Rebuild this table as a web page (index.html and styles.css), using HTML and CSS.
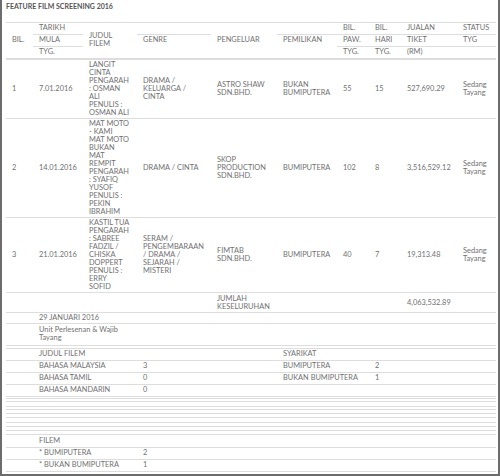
FILE: index.html
```html
<!DOCTYPE html>
<html lang="ms">
<head>
<meta charset="utf-8">
<title>Feature Film Screening 2016</title>
<link rel="stylesheet" href="styles.css">
</head>
<body>
<div class="panel">
  <h1 class="title">FEATURE FILM SCREENING 2016</h1>
  <table class="report">
    <colgroup>
      <col class="c-bil"><col class="c-tarikh"><col class="c-judul"><col class="c-genre"><col class="c-peng">
      <col class="c-pem"><col class="c-paw"><col class="c-hari"><col class="c-jual"><col class="c-status">
    </colgroup>
    <thead>
      <tr>
        <th rowspan="3" class="mid">BIL.</th>
        <th>TARIKH</th>
        <th rowspan="3" class="mid">JUDUL FILEM</th>
        <th></th>
        <th rowspan="3" class="mid">PENGELUAR</th>
        <th></th>
        <th>BIL.</th>
        <th>BIL.</th>
        <th>JUALAN</th>
        <th>STATUS</th>
      </tr>
      <tr>
        <th>MULA</th>
        <th rowspan="2" class="genre">GENRE</th>
        <th rowspan="2" class="pemilikan">PEMILIKAN</th>
        <th>PAW.</th>
        <th>HARI</th>
        <th>TIKET</th>
        <th>TYG</th>
      </tr>
      <tr>
        <th>TYG.</th>
        <th>TYG.</th>
        <th>TYG.</th>
        <th>(RM)</th>
        <th></th>
      </tr>
    </thead>
    <tbody>
      <tr class="first">
        <td>1</td>
        <td>7.01.2016</td>
        <td class="title-cell">LANGIT<br>CINTA<br>PENGARAH<br>: OSMAN<br>ALI<br>PENULIS :<br>OSMAN ALI</td>
        <td>DRAMA / KELUARGA / CINTA</td>
        <td>ASTRO SHAW SDN.BHD.</td>
        <td>BUKAN BUMIPUTERA</td>
        <td>55</td>
        <td>15</td>
        <td>527,690.29</td>
        <td>Sedang Tayang</td>
      </tr>
      <tr>
        <td>2</td>
        <td>14.01.2016</td>
        <td class="title-cell">MAT MOTO<br>- KAMI<br>MAT MOTO<br>BUKAN<br>MAT<br>REMPIT<br>PENGARAH<br>: SYAFIQ<br>YUSOF<br>PENULIS :<br>PEKIN<br>IBRAHIM</td>
        <td>DRAMA / CINTA</td>
        <td>SKOP PRODUCTION SDN.BHD.</td>
        <td>BUMIPUTERA</td>
        <td>102</td>
        <td>8</td>
        <td>3,516,529.12</td>
        <td>Sedang Tayang</td>
      </tr>
      <tr>
        <td>3</td>
        <td>21.01.2016</td>
        <td class="title-cell">KASTIL TUA<br>PENGARAH<br>: SABREE<br>FADZIL /<br>CHISKA<br>DOPPERT<br>PENULIS :<br>ERRY<br>SOFID</td>
        <td>SERAM / PENGEMBARAAN / DRAMA / SEJARAH / MISTERI</td>
        <td>FIMTAB SDN.BHD.</td>
        <td>BUMIPUTERA</td>
        <td>40</td>
        <td>7</td>
        <td>19,313.48</td>
        <td>Sedang Tayang</td>
      </tr>
      <tr class="total">
        <td></td><td></td><td></td><td></td>
        <td>JUMLAH KESELURUHAN</td>
        <td></td><td></td><td></td>
        <td>4,063,532.89</td>
        <td></td>
      </tr>
      <tr>
        <td></td>
        <td colspan="3">29 JANUARI 2016</td>
        <td></td><td></td><td></td><td></td><td></td><td></td>
      </tr>
      <tr class="unit">
        <td></td>
        <td colspan="2">Unit Perlesenan &amp; Wajib Tayang</td>
        <td></td><td></td><td></td><td></td><td></td><td></td><td></td>
      </tr>
      <tr><td colspan="10" class="sp p2"></td></tr>
      <tr class="sum">
        <td></td>
        <td colspan="2">JUDUL FILEM</td>
        <td></td>
        <td></td>
        <td colspan="2">SYARIKAT</td>
        <td></td><td></td><td></td>
      </tr>
      <tr class="sum">
        <td></td>
        <td colspan="2">BAHASA MALAYSIA</td>
        <td>3</td>
        <td></td>
        <td colspan="2">BUMIPUTERA</td>
        <td>2</td><td></td><td></td>
      </tr>
      <tr class="sum">
        <td></td>
        <td colspan="2">BAHASA TAMIL</td>
        <td>0</td>
        <td></td>
        <td colspan="2">BUKAN BUMIPUTERA</td>
        <td>1</td><td></td><td></td>
      </tr>
      <tr class="sum">
        <td></td>
        <td colspan="2">BAHASA MANDARIN</td>
        <td>0</td>
        <td></td>
        <td colspan="2"></td>
        <td></td><td></td><td></td>
      </tr>
      <tr><td colspan="10" class="sp p1"></td></tr>
      <tr><td colspan="10" class="sp p2"></td></tr>
      <tr><td colspan="10" class="sp p4"></td></tr>
      <tr><td colspan="10" class="sp p2"></td></tr>
      <tr><td colspan="10" class="sp p3"></td></tr>
      <tr><td colspan="10" class="sp p3"></td></tr>
      <tr><td colspan="10" class="sp p4"></td></tr>
      <tr><td colspan="10" class="sp p3"></td></tr>
      <tr><td colspan="10" class="sp p3"></td></tr>
      <tr><td colspan="10" class="sp p3"></td></tr>
      <tr class="sum filem">
        <td></td>
        <td colspan="2">FILEM</td>
        <td></td><td></td><td></td><td></td><td></td><td></td><td></td>
      </tr>
      <tr class="sum">
        <td></td>
        <td colspan="2">* BUMIPUTERA</td>
        <td>2</td>
        <td></td><td></td><td></td><td></td><td></td><td></td>
      </tr>
      <tr class="sum last">
        <td></td>
        <td colspan="2">* BUKAN BUMIPUTERA</td>
        <td>1</td>
        <td></td><td></td><td></td><td></td><td></td><td></td>
      </tr>
    </tbody>
  </table>
</div>
</body>
</html>
```

FILE: styles.css
```css
* {
  box-sizing: border-box;
}

html,
body {
  margin: 0;
  padding: 0;
  background: #ffffff;
}

body {
  font-family: Lato, "Open Sans", "Liberation Sans", sans-serif;
  font-size: 7.4px;
  line-height: 8px;
  color: #717171;
}

.panel {
  width: 500px;
  height: 476px;
  border: 2px solid #6c6c6c;
  border-top: 0;
  padding: 0 2px 0 4px;
  overflow: hidden;
}

.title {
  margin: 0;
  padding-top: 2px;
  font-size: 7px;
  line-height: 9px;
  font-weight: 700;
  color: #555555;
}

.report {
  margin-top: 11px;
  width: 490px;
  table-layout: fixed;
  border-collapse: separate;
  border-spacing: 0;
}

.c-bil { width: 27px; }
.c-tarikh { width: 50px; }
.c-judul { width: 54px; }
.c-genre { width: 74px; }
.c-peng { width: 66px; }
.c-pem { width: 60px; }
.c-paw { width: 32px; }
.c-hari { width: 32px; }
.c-jual { width: 56px; }
.c-status { width: 39px; }

.report th,
.report td {
  border-top: 1px solid #dddddd;
  text-align: left;
  font-weight: 400;
  padding: 1px 6px;
  vertical-align: middle;
}

.report th {
  padding: 1px 6px 2px;
  vertical-align: top;
}

.report th.mid {
  vertical-align: middle;
}

.report td.title-cell {
  white-space: nowrap;
}

.report tr.first td {
  border-top: 2px solid #dddddd;
}

.report tr.total td {
  padding: 2px 6px 1px;
}

.report tr.unit td {
  padding: 2px 6px 3px;
}

.report tr.sum td {
  padding: 1px 6px 2px;
}

.report tr.filem td {
  padding: 2px 6px 2px;
}

.report tr.last td {
  border-bottom: 1px solid #dddddd;
}

.report td.sp {
  padding: 0;
  height: 0;
  font-size: 0;
  line-height: 0;
}

.report td.p1 { padding-top: 1px; }
.report td.p2 { padding-top: 2px; }
.report td.p3 { padding-top: 3px; }
.report td.p4 { padding-top: 4px; }
```
